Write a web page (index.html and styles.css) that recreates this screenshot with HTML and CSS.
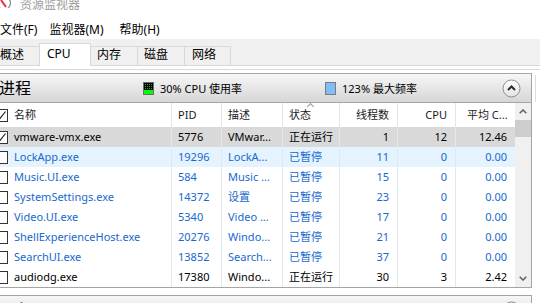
FILE: index.html
```html
<!DOCTYPE html>
<html lang="zh-CN">
  <head>
    <meta charset="UTF-8" />
    <title>资源监视器</title>
    <link rel="stylesheet" href="styles.css">
  </head>
  <body>
    <!-- window title, cut at the top -->
    <div class="titlebar">
      <svg class="app-icon" width="12" height="12" viewBox="0 0 12 12">
        <circle cx="4" cy="7" r="6.5" fill="#fff" stroke="#8a8a8a" stroke-width="1.2" />
        <path d="M1 4 L6 11" stroke="#d33" stroke-width="2" />
      </svg>
      <span>资源监视器</span>
    </div>

    <div class="menubar">
      <span>文件(F)</span>
      <span>监视器(M)</span>
      <span class="help">帮助(H)</span>
    </div>

    <div class="tabs">
      <div class="tab t-overview">概述</div>
      <div class="tab t-cpu active">CPU</div>
      <div class="tab">内存</div>
      <div class="tab">磁盘</div>
      <div class="tab t-net">网络</div>
    </div>

    <div class="content">
      <div class="pane">
        <!-- Processes section -->
        <div class="section-head">
          <span class="section-title">进程</span>
          <span class="stat stat-cpu"><span class="swatch swatch-cpu"></span>30% CPU 使用率</span>
          <span class="stat"><span class="swatch swatch-freq"></span>123% 最大频率</span>
          <span class="collapse">
            <svg width="19" height="19" viewBox="0 0 19 19">
              <defs>
                <linearGradient id="btn" x1="0" y1="0" x2="0" y2="1">
                  <stop offset="0" stop-color="#ffffff" />
                  <stop offset="1" stop-color="#e2e2e2" />
                </linearGradient>
              </defs>
              <circle cx="9.5" cy="9.5" r="8.5" fill="url(#btn)" stroke="#8c8c8c" />
              <path d="M6 11 L9.5 7.5 L13 11" fill="none" stroke="#2b2b2b" stroke-width="2" />
            </svg>
          </span>
        </div>

        <div class="list">
          <div class="rows">
            <div class="row head">
              <span class="name"><span class="check checked"></span>名称</span>
              <span>PID</span>
              <span>描述</span>
              <span class="sorted">状态<i class="sort-arrow"></i></span>
              <span class="num">线程数</span>
              <span class="num">CPU</span>
              <span class="avg">平均 C...</span>
            </div>

            <div class="row sel">
              <span class="name"><span class="check checked"></span>vmware-vmx.exe</span>
              <span>5776</span>
              <span>VMwar...</span>
              <span>正在运行</span>
              <span class="num">1</span>
              <span class="num">12</span>
              <span class="num">12.46</span>
            </div>
            <div class="row hot paused">
              <span class="name"><span class="check"></span>LockApp.exe</span>
              <span>19296</span>
              <span>LockA...</span>
              <span>已暂停</span>
              <span class="num">11</span>
              <span class="num">0</span>
              <span class="num">0.00</span>
            </div>
            <div class="row paused">
              <span class="name"><span class="check"></span>Music.UI.exe</span>
              <span>584</span>
              <span>Music ...</span>
              <span>已暂停</span>
              <span class="num">15</span>
              <span class="num">0</span>
              <span class="num">0.00</span>
            </div>
            <div class="row paused">
              <span class="name"><span class="check"></span>SystemSettings.exe</span>
              <span>14372</span>
              <span>设置</span>
              <span>已暂停</span>
              <span class="num">23</span>
              <span class="num">0</span>
              <span class="num">0.00</span>
            </div>
            <div class="row paused">
              <span class="name"><span class="check"></span>Video.UI.exe</span>
              <span>5340</span>
              <span>Video ...</span>
              <span>已暂停</span>
              <span class="num">17</span>
              <span class="num">0</span>
              <span class="num">0.00</span>
            </div>
            <div class="row paused">
              <span class="name"><span class="check"></span>ShellExperienceHost.exe</span>
              <span>20276</span>
              <span>Windo...</span>
              <span>已暂停</span>
              <span class="num">21</span>
              <span class="num">0</span>
              <span class="num">0.00</span>
            </div>
            <div class="row paused">
              <span class="name"><span class="check"></span>SearchUI.exe</span>
              <span>13852</span>
              <span>Search...</span>
              <span>已暂停</span>
              <span class="num">37</span>
              <span class="num">0</span>
              <span class="num">0.00</span>
            </div>
            <div class="row">
              <span class="name"><span class="check"></span>audiodg.exe</span>
              <span>17380</span>
              <span>Windo...</span>
              <span>正在运行</span>
              <span class="num">30</span>
              <span class="num">3</span>
              <span class="num">2.42</span>
            </div>
          </div>

          <div class="scrollbar">
            <span class="sb-btn">
              <svg width="8" height="5" viewBox="0 0 8 5"><path d="M0.7 4.3 L4 1 L7.3 4.3" fill="none" stroke="#606060" stroke-width="1.5" /></svg>
            </span>
            <span class="sb-thumb"></span>
            <span class="sb-track"></span>
            <span class="sb-btn">
              <svg width="8" height="5" viewBox="0 0 8 5"><path d="M0.7 0.7 L4 4 L7.3 0.7" fill="none" stroke="#606060" stroke-width="1.5" /></svg>
            </span>
          </div>
        </div>

        <!-- Services section (mostly below the fold) -->
        <div class="section-head next">
          <span class="section-title">服务</span>
          <span class="collapse">
            <svg width="19" height="19" viewBox="0 0 19 19">
              <circle cx="9.5" cy="9.5" r="8.5" fill="#f4f4f4" stroke="#8c8c8c" />
            </svg>
          </span>
        </div>
      </div>
      <div class="side"></div>
    </div>
  </body>
</html>
```

FILE: styles.css
```css
* {
  box-sizing: border-box;
}

body {
  margin: 0;
  width: 540px;
  height: 303px;
  overflow: hidden;
  background: #fff;
  font-family: "Noto Sans", "Noto Sans CJK SC", sans-serif;
  font-size: 12px;
  color: #000;
}

/* Title bar */
.titlebar {
  display: flex;
  height: 18px;
  margin-top: -4px;
  line-height: 18px;
  color: #9b9b9b;
}

.app-icon {
  margin-right: 8px;
}

/* Menu */
.menubar {
  display: flex;
  gap: 12px;
  height: 25px;
  padding-top: 6px;
  line-height: 19px;
}

.menubar .help {
  margin-left: 4px;
}

/* Tabs */
.tabs {
  display: flex;
  align-items: flex-end;
  height: 27px;
  margin-left: -8px;
  background: #f0f0f0;
  border-bottom: 1px solid #d9d9d9;
}

.tab {
  width: 48px;
  height: 19px;
  margin-right: -1px;
  padding-left: 6px;
  line-height: 15px;
  background: #f0f0f0;
  border: 1px solid #d9d9d9;
  border-bottom: 0;
}

.t-overview {
  padding-left: 7px;
}

.t-net {
  width: 47px;
  padding-left: 7px;
}

.tab.active {
  width: 52px;
  height: 23px;
  margin-bottom: -1px;
  padding-left: 7px;
  line-height: 20px;
  background: #fff;
}

/* Tab page */
.content {
  display: flex;
  margin-top: 3px;
  padding-top: 3px;
  border-top: 1px solid #dadada;
}

.pane {
  width: 532px;
}

.side {
  flex: 1;
  height: 27px;
  margin: 2px 0 0 3px;
  border-left: 1px solid #dcdcdc;
}

/* Section header bars */
.section-head {
  display: flex;
  align-items: center;
  height: 30px;
  background: linear-gradient(#f7f7f7, #d6d6d6);
  border: 1px solid #a5a5a5;
  border-left: 0;
  font-size: 11px;
}

.section-head.next {
  margin-top: 7px;
  align-items: flex-start;
}

.section-title {
  width: 143px;
  text-indent: -1px;
  font-size: 16px;
  line-height: 28px;
}

.stat {
  display: flex;
  align-items: center;
}

.stat-cpu {
  width: 182px;
}

.swatch {
  width: 11px;
  height: 13px;
  margin-right: 6px;
  border: 1px solid #6d6d6d;
}

.swatch-cpu {
  background:
    linear-gradient(#00ff00, #00ff00) bottom / 100% 4px no-repeat,
    repeating-linear-gradient(0deg, #000 0 1px, transparent 1px 2px),
    repeating-linear-gradient(90deg, #000 0 1px, #1fa51f 1px 2px);
}

.swatch-freq {
  background: #83bdf7;
  border-color: #7b7b7b;
}

.collapse {
  display: flex;
  margin-left: auto;
  margin-right: 10px;
}

.next .collapse {
  margin-top: 5px;
}

/* Process list */
.list {
  display: flex;
  border-right: 1px solid #a5a5a5;
  border-bottom: 1px solid #a5a5a5;
}

.rows {
  width: 515px;
}

.row {
  display: grid;
  grid-template-columns: 172px 50px 61px 57px 58px 58px 59px;
  height: 20px;
  line-height: 20px;
  font-size: 11px;
}

.row > span {
  padding: 0 6px;
  white-space: nowrap;
  overflow: hidden;
  border-right: 1px solid #e1e7ee;
}

.row > span:last-child {
  border-right: 0;
}

.row > .num {
  text-align: right;
  padding-right: 8px;
}

.row > .name {
  display: flex;
  align-items: center;
  padding-left: 0;
}

.row.head {
  height: 24px;
  line-height: 24px;
  color: #1b1b1b;
}

.row.head > span {
  border-right-color: #e5e5e5;
}

.row.head > .avg {
  padding-left: 11px;
}

.sorted {
  position: relative;
}

.sort-arrow {
  position: absolute;
  top: 1px;
  left: 25px;
  width: 5px;
  height: 5px;
  border-top: 1px solid #9a9a9a;
  border-left: 1px solid #9a9a9a;
  transform: rotate(45deg);
}

.row.sel {
  background: #d9d9d9;
}

.row.sel > span {
  border-right-color: #e6e6e6;
}

.row.hot {
  background: #e5f3ff;
}

.row.paused {
  color: #1669d0;
}

/* Checkboxes */
.check {
  flex: none;
  width: 13px;
  height: 13px;
  margin: 0 6px 0 -5px;
  background: #fff;
  border: 1px solid #333;
  color: #000;
}

.check.checked {
  background:
    url("data:image/svg+xml;utf8,<svg xmlns='http://www.w3.org/2000/svg' width='11' height='11'><path d='M1.5 5.5 L4 8.5 L9.5 1.5' fill='none' stroke='%23222' stroke-width='1.2'/></svg>")
    center / 11px 11px no-repeat,
    #fff;
}

/* Scrollbar */
.scrollbar {
  display: flex;
  flex-direction: column;
  width: 16px;
  background: #f0f0f0;
}

.sb-btn {
  display: flex;
  align-items: center;
  justify-content: center;
  height: 17px;
}

.sb-thumb {
  height: 17px;
  background: #cdcdcd;
}

.sb-track {
  flex: 1;
}
```
